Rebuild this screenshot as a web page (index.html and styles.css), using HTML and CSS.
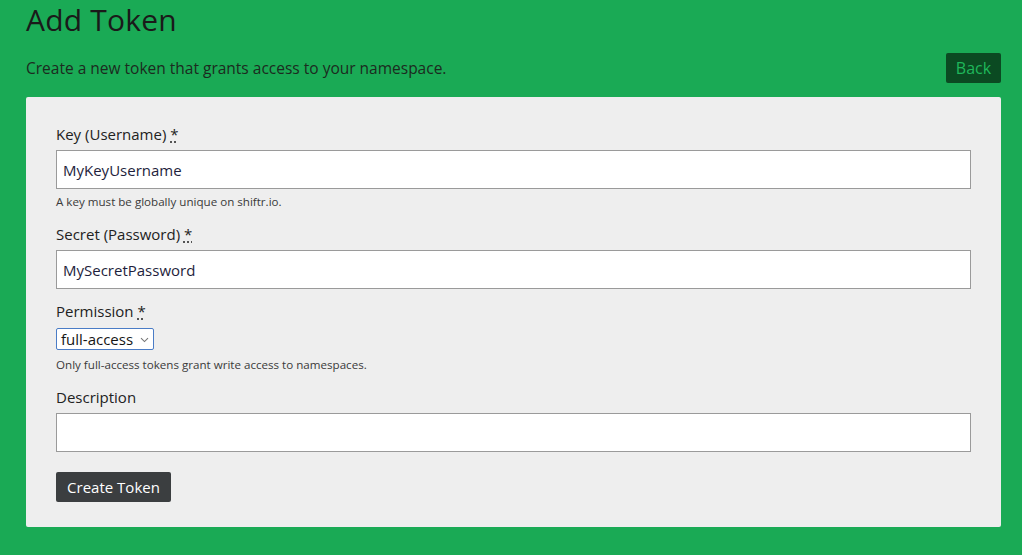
FILE: index.html
```html
<!DOCTYPE html>
<html lang="en">
<head>
<meta charset="utf-8">
<title>Add Token</title>
<link rel="stylesheet" href="styles.css">
</head>
<body>
<div class="page">
  <h1 class="title">Add Token</h1>
  <div class="subhead">
    <p class="lead">Create a new token that grants access to your namespace.</p>
    <a class="back" href="#">Back</a>
  </div>
  <form class="card">
    <label class="label">Key (Username) <abbr title="required">*</abbr></label>
    <input class="input" type="text" value="MyKeyUsername">
    <p class="help help-key">A key must be globally unique on shiftr.io.</p>

    <label class="label">Secret (Password) <abbr title="required">*</abbr></label>
    <input class="input" type="text" value="MySecretPassword">

    <label class="label label-perm">Permission <abbr title="required">*</abbr></label>
    <div class="select-wrap">
      <div class="select">full-access
        <svg class="chev" width="9" height="6" viewBox="0 0 9 6"><path d="M1 1.2 L4.5 4.6 L8 1.2" fill="none" stroke="#777" stroke-width="1.1"/></svg>
      </div>
    </div>
    <p class="help help-perm">Only full-access tokens grant write access to namespaces.</p>

    <label class="label label-desc">Description</label>
    <input class="input" type="text" value="">

    <div class="actions">
      <button class="btn" type="button">Create Token</button>
    </div>
  </form>
</div>
</body>
</html>
```
FILE: styles.css
```css
html, body {
  margin: 0;
  padding: 0;
  background: #1aaa55;
  height: 100%;
}
body {
  font-family: "Open Sans", "Noto Sans", sans-serif;
  color: #1c1c1c;
  overflow: hidden;
}
.page {
  width: 975px;
  margin-left: 26px;
}
.title {
  margin: 0;
  font-size: 30px;
  font-weight: 400;
  line-height: 40px;
  color: #1a1a1a;
  letter-spacing: 0.2px;
}
.subhead {
  display: flex;
  align-items: center;
  justify-content: space-between;
  margin-top: 13px;
  height: 30px;
}
.lead {
  margin: 0;
  font-size: 15.5px;
  color: #1c2a20;
}
.back {
  display: inline-flex;
  align-items: center;
  justify-content: center;
  width: 55px;
  height: 30px;
  background: #0b4a22;
  color: #1fb75b;
  border-radius: 2px;
  font-size: 16px;
  text-decoration: none;
}
.card {
  display: flex;
  flex-direction: column;
  margin-top: 14px;
  background: #eeeeee;
  border-radius: 2px;
  padding: 27px 30px 25px 30px;
}
.label {
  display: block;
  font-size: 15px;
  line-height: 20px;
  color: #222;
}
.label abbr {
  text-decoration: underline dotted;
  text-underline-offset: 2px;
  cursor: help;
}
.input {
  box-sizing: border-box;
  display: block;
  width: 100%;
  height: 39px;
  margin: 6px 0 0 0;
  padding: 0 6px;
  border: 1px solid #9a9a9a;
  background: #fff;
  font-family: inherit;
  font-size: 15px;
  color: #1e1e3c;
  outline: none;
}
.help {
  margin: 6px 0 0 0;
  font-size: 11.6px;
  line-height: 14px;
  color: #3a3a3a;
}
.help-key + .label {
  margin-top: 15px;
}
.label-perm {
  margin-top: 12px;
}
.select-wrap {
  display: flex;
  margin-top: 7px;
}
.select {
  box-sizing: border-box;
  display: flex;
  align-items: center;
  gap: 6px;
  height: 22px;
  width: 98px;
  padding: 0 4px 0 4px;
  background: #fff;
  border: 1px solid #4a7cc6;
  border-radius: 2px;
  font-size: 15px;
  color: #151515;
}
.chev {
  margin-left: auto;
  margin-top: 1px;
}
.help-perm {
  margin-top: 8px;
}
.label-desc {
  margin-top: 15px;
}
.actions {
  display: flex;
  margin-top: 20px;
}
.btn {
  height: 30px;
  width: 115px;
  padding: 0;
  border: none;
  border-radius: 2px;
  background: #3b3e40;
  color: #fff;
  font-family: inherit;
  font-size: 15px;
  cursor: pointer;
}
```
